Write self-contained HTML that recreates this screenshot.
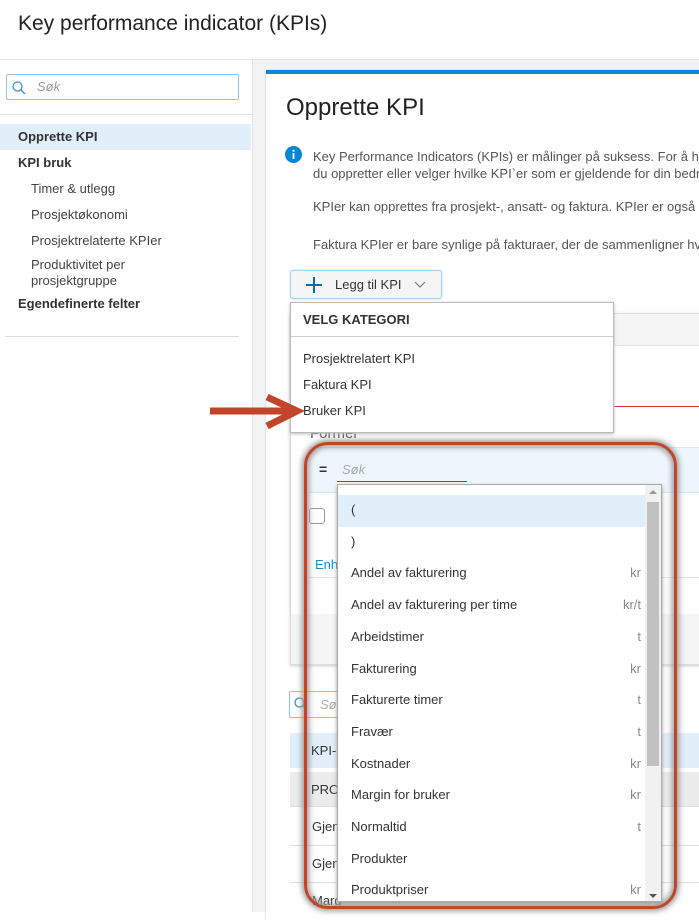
<!DOCTYPE html>
<html><head><meta charset="utf-8"><style>
*{box-sizing:border-box;margin:0;padding:0}
body{width:699px;height:912px;overflow:hidden;background:#fff;font-family:"Liberation Sans",sans-serif;color:#333;position:relative}
.a{position:absolute;white-space:nowrap}
.s13{font-size:13px}
</style></head><body>
<div class="a" style="left:0;top:0;width:699px;height:60px;border-bottom:1px solid #e6e6e6;background:#fff"></div>
<div class="a" style="left:18px;top:12px;font-size:21px;color:#222">Key performance indicator (KPIs)</div>
<!-- left -->
<div class="a" style="left:252px;top:60px;width:447px;height:852px;background:#f3f3f3;border-left:1px solid #e3e3e3"></div>
<div class="a" style="left:6px;top:74px;width:233px;height:26px;border:1px solid #8cc4ea;border-radius:2px"></div>
<svg class="a" style="left:11px;top:80px" width="16" height="16"><circle cx="6.5" cy="6.5" r="4.5" fill="none" stroke="#3a8fd0" stroke-width="1.3"/><line x1="10" y1="10" x2="14" y2="14" stroke="#3a8fd0" stroke-width="1.3"/></svg>
<div class="a s13" style="left:37px;top:79px;color:#999;font-style:italic">Søk</div>
<div class="a" style="left:0;top:114px;width:252px;height:1px;background:#e3e3e3"></div>
<div class="a" style="left:0;top:124px;width:251px;height:26px;background:#e1effb"></div>
<div class="a s13" style="left:18px;top:129px;font-weight:bold">Opprette KPI</div>
<div class="a s13" style="left:18px;top:155px;font-weight:bold">KPI bruk</div>
<div class="a s13" style="left:31px;top:181px;color:#444">Timer &amp; utlegg</div>
<div class="a s13" style="left:31px;top:207px;color:#444">Prosjektøkonomi</div>
<div class="a s13" style="left:31px;top:233px;color:#444">Prosjektrelaterte KPIer</div>
<div class="a s13" style="left:31px;top:257px;color:#444;line-height:16px">Produktivitet per<br>prosjektgruppe</div>
<div class="a s13" style="left:18px;top:296px;font-weight:bold">Egendefinerte felter</div>
<div class="a" style="left:5px;top:336px;width:234px;height:1px;background:#ddd"></div>
<!-- card -->
<div class="a" style="left:266px;top:70px;width:440px;height:850px;background:#fff;border-top:4px solid #0a86d6;box-shadow:0 0 2px #ccc"></div>
<div class="a" style="left:286px;top:94px;font-size:24px;color:#222;font-weight:300">Opprette KPI</div>
<svg class="a" style="left:285px;top:146px" width="17" height="17"><circle cx="8.5" cy="8.5" r="8.5" fill="#0a86d6"/><rect x="7.6" y="7" width="1.8" height="6" fill="#fff"/><circle cx="8.5" cy="4.7" r="1.1" fill="#fff"/></svg>
<div class="a s13" style="left:313px;top:148px;color:#555;line-height:17px">Key Performance Indicators (KPIs) er målinger på suksess. For å hjelpe<br>du oppretter eller velger hvilke KPI`er som er gjeldende for din bedrift</div>
<div class="a s13" style="left:313px;top:199px;color:#555">KPIer kan opprettes fra prosjekt-, ansatt- og faktura. KPIer er også</div>
<div class="a s13" style="left:313px;top:237px;color:#555">Faktura KPIer er bare synlige på fakturaer, der de sammenligner hva</div>
<!-- background panel -->
<div class="a" style="left:290px;top:313px;width:420px;height:352px;border:1px solid #ddd;background:#fff;box-shadow:0 1px 3px #ccc"></div>
<div class="a" style="left:291px;top:314px;width:410px;height:32px;background:#f5f5f5;border-bottom:1px solid #e3e3e3"></div>
<div class="a" style="left:600px;top:406px;width:99px;height:1px;background:#d33"></div>
<div class="a s13" style="left:310px;top:425px;color:#555;font-size:15px">Formel</div>
<div class="a" style="left:309px;top:447px;width:390px;height:46px;background:#eef6fd;border-top:1px solid #d6e8f6;border-bottom:1px solid #d6e8f6"></div>
<div class="a" style="left:319px;top:461px;font-weight:bold;font-size:14px">=</div>
<div class="a s13" style="left:342px;top:462px;color:#aaa;font-style:italic">Søk</div>
<div class="a" style="left:337px;top:481px;width:130px;height:1px;background:#0a6db0"></div>
<div class="a" style="left:309px;top:508px;width:16px;height:16px;border:1px solid #999;border-radius:3px;background:#fff"></div>
<div class="a s13" style="left:315px;top:557px;color:#1a8ad8">Enh</div>
<div class="a" style="left:309px;top:577px;width:390px;height:1px;background:#e3e3e3"></div>
<div class="a" style="left:291px;top:614px;width:410px;height:50px;background:#f5f5f5"></div>
<!-- lower -->
<div class="a" style="left:289px;top:691px;width:60px;height:27px;border:1px solid #8cc4ea;border-radius:2px;background:#fff"></div>
<svg class="a" style="left:293px;top:696px" width="16" height="16"><circle cx="6.5" cy="6.5" r="4.5" fill="none" stroke="#3a8fd0" stroke-width="1.3"/><line x1="10" y1="10" x2="14" y2="14" stroke="#3a8fd0" stroke-width="1.3"/></svg>
<div class="a s13" style="left:320px;top:697px;color:#aaa;font-style:italic">Søk</div>
<div class="a" style="left:290px;top:733px;width:410px;height:35px;background:#e1effb"></div>
<div class="a s13" style="left:311px;top:743px">KPI-</div>
<div class="a" style="left:290px;top:772px;width:410px;height:35px;background:#ececec;border-bottom:1px solid #ddd"></div>
<div class="a s13" style="left:311px;top:782px">PRO</div>
<div class="a s13" style="left:312px;top:819px">Gjen</div>
<div class="a" style="left:290px;top:845px;width:410px;height:1px;background:#ddd"></div>
<div class="a s13" style="left:312px;top:856px">Gjen</div>
<div class="a" style="left:290px;top:882px;width:410px;height:1px;background:#ddd"></div>
<div class="a s13" style="left:312px;top:893px">Marg</div>
<!-- button -->
<div class="a" style="left:290px;top:270px;width:152px;height:29px;background:#f5f5f5;border:1px solid #a6d0f0;border-radius:3px;box-shadow:0 0 2px #bfe0f7"></div>
<svg class="a" style="left:305px;top:276px" width="18" height="18"><path d="M9 1V17M1 9H17" stroke="#0a6db0" stroke-width="2"/></svg>
<div class="a s13" style="left:335px;top:277px;color:#333">Legg til KPI</div>
<svg class="a" style="left:414px;top:281px" width="12" height="8"><path d="M1 1L6 6L11 1" fill="none" stroke="#777" stroke-width="1.2"/></svg>
<!-- category menu -->
<div class="a" style="left:290px;top:302px;width:324px;height:131px;background:#fff;border:1px solid #bbb;box-shadow:0 1px 3px #bbb"></div>
<div class="a s13" style="left:303px;top:312px;font-weight:bold;color:#333">VELG KATEGORI</div>
<div class="a" style="left:291px;top:336px;width:322px;height:1px;background:#ccc"></div>
<div class="a s13" style="left:303px;top:351px">Prosjektrelatert KPI</div>
<div class="a s13" style="left:303px;top:377px">Faktura KPI</div>
<div class="a s13" style="left:303px;top:403px">Bruker KPI</div>
<!-- arrow -->
<svg class="a" style="left:205px;top:390px" width="100" height="45"><path d="M5 21H88" stroke="#c0452b" stroke-width="7"/><path d="M62 7L92 21L62 36" fill="none" stroke="#c0452b" stroke-width="7"/></svg>
<!-- red highlight -->
<div class="a" style="left:304px;top:442px;width:373px;height:467px;border:3px solid #c0452b;border-radius:24px;box-shadow:0 0 6px 2px #999, inset 0 0 6px 2px #999"></div>
<!-- list -->
<div class="a" style="left:337px;top:484px;width:325px;height:418px;background:#fff;border:1px solid #aaa;box-shadow:0 2px 4px #999;overflow:hidden">
<div style="position:absolute;left:0;top:10px;width:307px;height:32px;background:#e1effb"></div>
<div style="position:absolute;left:307px;top:0;width:17px;height:418px;background:#f1f1f1"></div>
<div style="position:absolute;left:309px;top:17px;width:12px;height:264px;background:#c1c1c1"></div>
<svg style="position:absolute;left:310px;top:4px" width="10" height="6"><path d="M1 5L5 1L9 5Z" fill="#999"/></svg>
<svg style="position:absolute;left:310px;top:408px" width="10" height="6"><path d="M1 1L5 5L9 1Z" fill="#555"/></svg>
</div>
<div class="a" style="left:351px;top:494px;width:290px;font-size:13px;line-height:31.7px;color:#333">
<div>(</div><div>)</div>
<div>Andel av fakturering<span style="float:right;color:#888">kr</span></div>
<div>Andel av fakturering per time<span style="float:right;color:#888">kr/t</span></div>
<div>Arbeidstimer<span style="float:right;color:#888">t</span></div>
<div>Fakturering<span style="float:right;color:#888">kr</span></div>
<div>Fakturerte timer<span style="float:right;color:#888">t</span></div>
<div>Fravær<span style="float:right;color:#888">t</span></div>
<div>Kostnader<span style="float:right;color:#888">kr</span></div>
<div>Margin for bruker<span style="float:right;color:#888">kr</span></div>
<div>Normaltid<span style="float:right;color:#888">t</span></div>
<div>Produkter</div>
<div>Produktpriser<span style="float:right;color:#888">kr</span></div>
</div>
</body></html>
